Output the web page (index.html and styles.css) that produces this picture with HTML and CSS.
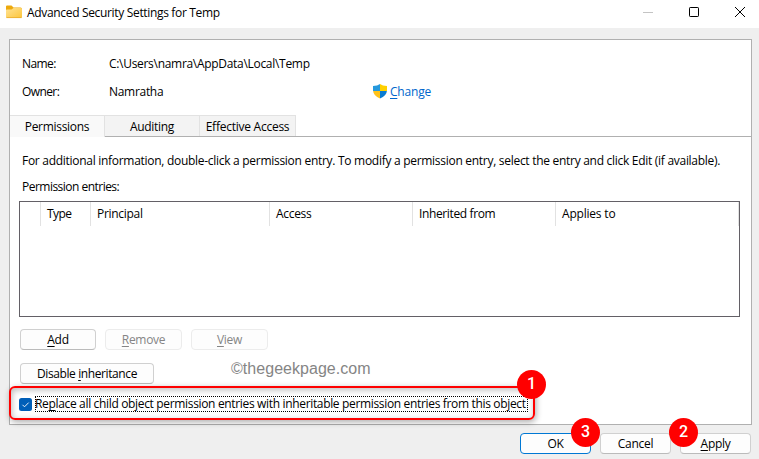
FILE: index.html
```html
<!DOCTYPE html>
<html lang="en">
<head>
<meta charset="utf-8">
<title>Advanced Security Settings for Temp</title>
<link rel="stylesheet" href="styles.css">
</head>
<body>
<header class="titlebar">
  <svg class="folder" width="16" height="14" viewBox="0 0 16 14">
    <defs><linearGradient id="fold" x1="0" y1="0" x2="1" y2="1"><stop offset="0" stop-color="#ffe293"/><stop offset="1" stop-color="#fcc53b"/></linearGradient></defs>
    <path d="M0 1.500Q0 .5 1 .5H5.500L7.500 2.500H14.500Q16 2.500 16 4V8H0Z" fill="#eda90c"/>
    <path d="M0 5Q0 4.500 1 4.500H5.500L7.500 3H15Q16 3 16 4V12Q16 13 15 13H1Q0 13 0 12Z" fill="url(#fold)"/>
    <path d="M.5 12.600H15.500" stroke="#e9aa2c" stroke-width=".8"/>
  </svg>
  <h1 class="title">Advanced Security Settings for Temp</h1>
  <div class="controls">
    <svg width="10" height="10" viewBox="0 0 10 10"><path d="M0 5.500H10" stroke="#c4c4c4"/></svg>
    <svg width="10" height="10" viewBox="0 0 10 10"><rect x=".5" y=".5" width="9" height="9" rx=".7" fill="none" stroke="#000"/></svg>
    <svg width="10" height="10" viewBox="0 0 10 10"><path d="M0 0L10 10M10 0L0 10" stroke="#000"/></svg>
  </div>
</header>
<main class="panel">
  <dl class="info">
    <dt class="t-name">Name:</dt><dd>C:\Users\namra\AppData\Local\Temp</dd>
    <dt class="t-name">Owner:</dt><dd class="owner"><span class="owner-name">Namratha</span>
      <svg width="14" height="15" viewBox="0 0 14 15">
        <clipPath id="sh"><path d="M7 0Q9.500 2 14 2V6.500Q13.500 12 7 14.500Q.5 12 0 6.500V2Q4.500 2 7 0Z"/></clipPath>
        <g clip-path="url(#sh)"><path d="M0 0H7V7H0Z" fill="#2599dd"/><path d="M7 0H14V7H7Z" fill="#ffd000"/><path d="M0 7H7V15H0Z" fill="#ffc21a"/><path d="M7 7H14V15H7Z" fill="#087bd2"/></g>
      </svg>
      <a class="change"><u>C</u>hange</a></dd>
  </dl>
  <nav class="tabs"><span class="tab active">Permissions</span><span class="tab auditing">Auditing</span><span class="tab effective">Effective Access</span></nav>
  <section class="content">
    <p class="help">For additional information, double-click a permission entry. To modify a permission entry, select the entry and click Edit (if available).</p>
    <p class="entries">Permission entries:</p>
    <div class="table"><div class="head"><span></span><span class="h-type">Type</span><span>Principal</span><span>Access</span><span class="h-inherited">Inherited from</span><span class="h-applies">Applies to</span></div></div>
    <div class="row actions"><button class="btn w76"><u>A</u>dd</button><button class="btn w77" disabled><u>R</u>emove</button><button class="btn w77" disabled><u>V</u>iew</button></div>
    <div class="row"><button class="btn w134"><span class="t-disable">Disable <u>i</u>nheritance</span></button></div>
    <label class="replace"><svg width="13" height="13" viewBox="0 0 13 13"><rect width="13" height="13" rx="2.500" fill="#005fb8"/><path d="M3.500 6.800L5.500 8.800L9.700 4.600" fill="none" stroke="#fff" stroke-width=".9"/></svg><span class="focus">Re<u>p</u>lace all child object permission entries with inheritable permission entries from this object</span></label>
  </section>
</main>
<footer class="footer"><button class="btn ok">OK</button><button class="btn cancel">Cancel</button><button class="btn apply"><u>A</u>pply</button></footer>
<div class="watermark">©thegeekpage.com</div>
<div class="highlight"></div>
<div class="badge one">1</div><div class="badge two">2</div><div class="badge three">3</div>
</body>
</html>
```
FILE: styles.css
```css
* { box-sizing: border-box; }
body { margin: 0; width: 759px; height: 459px; overflow: hidden; position: relative; background: #efefef; color: #000; font: 12px/16px "Open Sans", "Noto Sans", sans-serif; letter-spacing: -.3px; white-space: nowrap; }
h1, p, dl, dd { margin: 0; }
u { text-decoration: underline; text-underline-offset: 2px; text-decoration-thickness: 1px; text-decoration-skip-ink: none; }
.titlebar { height: 28px; background: #fff; display: flex; padding: 5px 14px 0 6px; }
.title { font-size: 12px; font-weight: 400; margin-left: 5px; line-height: 16px; letter-spacing: -.33px; }
.controls { margin-left: auto; display: flex; gap: 36px; padding: 2px 0 0; }
.panel { margin: 11px 7px 0 9px; height: 386px; border: 1px solid #b0b0b0; background: #fff; }
.info { height: 75px; padding: 16px 0 0 12px; display: grid; grid-template-columns: 87px 1fr; grid-auto-rows: 28px; }
.t-name { letter-spacing: -.6px; }
.owner { display: flex; }
.owner-name { width: 264px; }
.change { color: #0066cc; margin-left: 3px; letter-spacing: -.2px; }
.tabs { height: 22px; display: flex; border-bottom: 1px solid #b0b0b0; }
.tab { border: 1px solid #e2e2e2; border-left: 0; border-bottom: 0; background: #f3f3f3; text-align: center; line-height: 21px; height: 21px; width: 95px; }
.active { background: #f9f9f9; height: 22px; }
.effective { width: 96px; letter-spacing: -.25px; }
.content { padding: 16px 11px 0 9px; }
.help, .entries { padding-left: 3px; }
.help { letter-spacing: -.286px; }
.entries { margin-top: 10px; letter-spacing: -.52px; }
.table { height: 116px; margin-top: 6px; border: 1px solid #636066; }
.head { display: grid; grid-template-columns: 21px 50px 179px 143px 143px 183px; height: 24px; line-height: 23px; }
.head span { border-right: 1px solid #e2e2e2; padding-left: 6px; }
.head .h-type { letter-spacing: -.6px; }
.head .h-inherited { letter-spacing: -.37px; }
.head .h-applies { letter-spacing: -.2px; }
.row { margin-top: 13px; padding-left: 1px; display: flex; gap: 9px; }
.actions { margin-top: 12px; }
.btn { height: 21px; padding: 0; border: 1px solid #d0d0d0; border-bottom-color: #bbb; border-radius: 4px; background: #fdfdfd; color: #000; font: inherit; letter-spacing: inherit; line-height: 19px; }
.btn:disabled { color: #858585; border-color: #ececec; }
.w76 { width: 76px; }
.w77 { width: 77px; }
.w134 { width: 134px; }
.t-disable { letter-spacing: -.4px; }
.replace { display: flex; align-items: center; margin-top: 12px; height: 16px; gap: 3px; }
.focus { width: 493px; height: 16px; border: 1px dotted #000; line-height: 14px; letter-spacing: -.337px; text-indent: -1px; }
.footer { display: flex; justify-content: flex-end; gap: 9px; padding: 8px 8px 0 0; }
.footer .btn { width: 71px; }
.footer .ok { border-color: #0078d4; }
.watermark { position: absolute; left: 231px; top: 359px; font: 16px/20px "Liberation Sans", sans-serif; letter-spacing: .04px; color: #858585; }
.highlight { position: absolute; left: 9px; top: 386px; width: 526px; height: 34px; border: 2px solid #f00; border-radius: 6px; box-shadow: 1px 2px 6px #0005, inset 1px 2px 6px #0004; }
.badge { position: absolute; width: 29px; height: 29px; border-radius: 50%; background: #f00; color: #fff; text-align: center; font: 500 16px/28px Roboto, sans-serif; letter-spacing: 0; }
.one { left: 517px; top: 370px; }
.two { left: 669px; top: 418px; }
.three { left: 571px; top: 418px; }
```
